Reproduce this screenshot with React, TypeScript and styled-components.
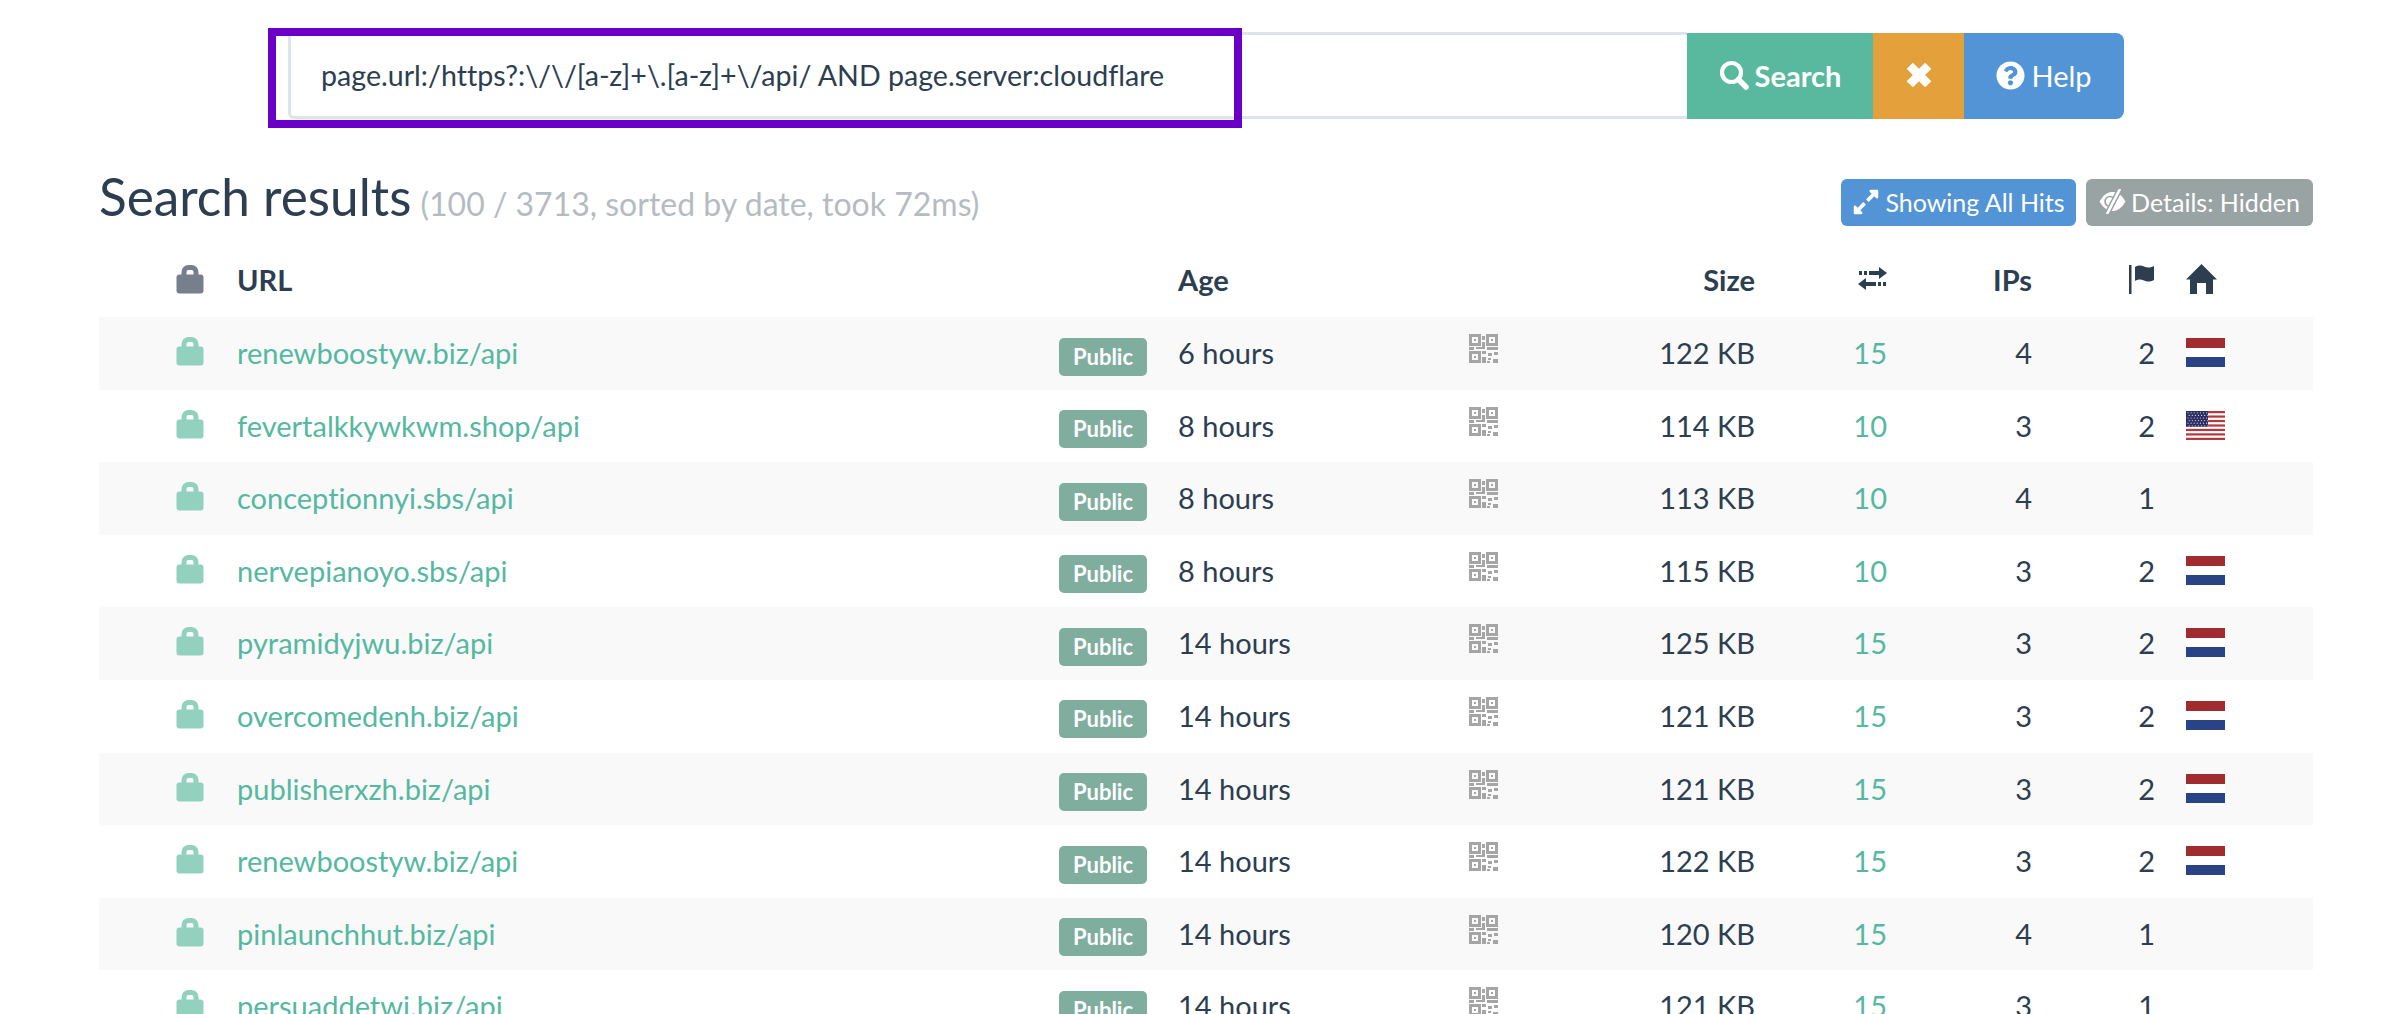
import React from 'react';
import styled, { createGlobalStyle } from 'styled-components';
import { FaQuestionCircle, FaExpandAlt } from 'react-icons/fa';

const Global = createGlobalStyle`
  html, body { margin: 0; padding: 0; background: #fff; height: 1014px; overflow: hidden; }
  body { font-family: Lato, "Open Sans", sans-serif; color: #2c3e50; font-variant-ligatures: none; }
  * { box-sizing: border-box; }
`;

const Page = styled.div`
  width: 2406px;
  height: 1014px;
  overflow: hidden;
  padding: 32px 93px 0 99px;
`;

const SearchBar = styled.form`
  position: relative;
  display: flex;
  margin: 0 0 0 189px;
  width: 1836px;
  height: 87px;
`;

const QueryInput = styled.div`
  flex: 1;
  display: flex;
  align-items: center;
  padding: 0 0 2px 30px;
  font-size: 28.6px;
  color: #2c3e50;
  background: #fff;
  border: 3px solid #dce4ec;
  border-right: none;
  border-radius: 6px 0 0 6px;
`;

const Highlight = styled.div`
  position: absolute;
  left: -20px;
  top: -4px;
  width: 974px;
  height: 100px;
  border: 8px solid #6a00c8;
  pointer-events: none;
`;

const SearchButton = styled.button<{ $bg: string; $w: number; $last?: boolean }>`
  width: ${p => p.$w}px;
  height: 86px;
  margin-top: 1px;
  display: flex;
  align-items: center;
  justify-content: center;
  gap: 6px;
  border: none;
  padding: 0 0 2px;
  background: ${p => p.$bg};
  color: #fff;
  font-family: inherit;
  font-size: 29px;
  font-weight: ${p => (p.$last ? 400 : 700)};
  border-radius: ${p => (p.$last ? '0 8px 8px 0' : '0')};
`;

const TitleRow = styled.div`
  display: flex;
  justify-content: space-between;
  align-items: flex-start;
  height: 89px;
  margin-top: 47px;
`;

const Title = styled.h2`
  margin: 0;
  font-size: 51.3px;
  line-height: 60px;
  font-weight: 400;
  color: #2c3e50;
`;

const TitleNote = styled.small`
  font-size: 32px;
  margin-left: -4px;
  color: #b4bcc2;
  font-weight: 400;
`;

const ToggleGroup = styled.div`
  display: flex;
  gap: 10px;
  margin-top: 13px;
`;

const ToggleButton = styled.button<{ $bg: string; $w: number }>`
  width: ${p => p.$w}px;
  height: 47px;
  display: flex;
  align-items: center;
  justify-content: center;
  gap: 5px;
  padding: 0 0 2px;
  border: none;
  border-radius: 6px;
  background: ${p => p.$bg};
  color: #fff;
  font-family: inherit;
  font-size: 25px;
`;

const columns = '138px 822px 119px 291px 131px 155px 132px 145px 123px 1fr';

const HeaderRow = styled.div`
  display: grid;
  grid-template-columns: ${columns};
  height: 62px;
  padding-bottom: 14px;
  align-items: center;
  font-size: 29px;
  font-weight: 700;
  color: #2c3e50;
`;

const Row = styled.div<{ $striped: boolean }>`
  display: grid;
  grid-template-columns: ${columns};
  height: 72.6px;
  align-items: start;
  font-size: 29px;
  background: ${p => (p.$striped ? '#f9f9f9' : '#fff')};
`;

const Cell = styled.div<{ $right?: boolean }>`
  padding-top: 19px;
  line-height: 33px;
  text-align: ${p => (p.$right ? 'right' : 'left')};
`;

const HeadCell = styled.div<{ $right?: boolean; $inset?: boolean }>`
  display: flex;
  align-items: center;
  justify-content: ${p => (p.$right ? 'flex-end' : 'flex-start')};
  padding-left: ${p => (p.$inset ? '31px' : '0')};
`;

const LockCell = styled.div`
  padding: 20px 0 0 77px;
  display: flex;
`;

const HeadLockCell = styled.div`
  padding-left: 77px;
  display: flex;
`;

const UrlLink = styled.a`
  color: #55b8a0;
  text-decoration: none;
`;

const Badge = styled.span`
  display: flex;
  align-items: center;
  justify-content: center;
  width: 88px;
  height: 38px;
  margin-top: 20.5px;
  padding-bottom: 1px;
  border-radius: 5px;
  background: #7fae9f;
  color: #fff;
  font-size: 22px;
  font-weight: 700;
`;

const QrCell = styled.div`
  padding-top: 17px;
  display: flex;
`;

const FlagCell = styled.div`
  padding: 21px 0 0 31px;
  display: flex;
`;

const Count = styled(Cell)`
  color: #55b8a0;
`;

const LockIcon = ({ color }: { color: string }) => (
  <svg width="28" height="29" viewBox="0 0 28 29">
    <path d="M8 12V7a4.5 4.5 0 0 1 4.5-4.5h3A4.5 4.5 0 0 1 20 7v5" fill="none" stroke={color} strokeWidth="5" />
    <rect x="0.5" y="9.5" width="27" height="19" rx="3" fill={color} />
  </svg>
);

const SearchIcon = () => (
  <svg width="30" height="30" viewBox="0 0 30 30" fill="none" stroke="#fff">
    <circle cx="12.5" cy="12.5" r="9.5" strokeWidth="4.2" />
    <path d="M19.5 19.5L27 27" strokeWidth="5.5" strokeLinecap="round" />
  </svg>
);

const TimesIcon = () => (
  <svg width="32" height="32" viewBox="0 0 26 26">
    <path d="M3 8L8 3l5 5 5-5 5 5-5 5 5 5-5 5-5-5-5 5-5-5 5-5z" fill="#fff" />
  </svg>
);

const ExchangeIcon = () => (
  <svg width="29" height="26" viewBox="0 0 29 26" fill="#2c3e50">
    <path d="M1 5h3v4H1zM6 5h3v4H6zM11 5h10V1l8 6-8 6V9H11zM28 16h-3v4h3zM23 16h-3v4h3zM18 16H8v-4L0 18l8 6v-4h10z" />
  </svg>
);

const FlagIcon = () => (
  <svg width="26" height="30" viewBox="0 0 26 30" fill="#2c3e50">
    <rect x="0" y="1" width="2.5" height="29" />
    <path d="M6 3c3-2 6-2 9-.5s6 1.5 10-.5v14c-4 2-7 2-10 .5s-6-1.5-9 .5z" />
  </svg>
);

const HomeIcon = () => (
  <svg width="31" height="30" viewBox="0 0 31 30" fill="#2c3e50">
    <path d="M15.5 0L31 15.5h-4V30h-7V19h-9v11H4V15.5H0z" />
  </svg>
);

const EyeSlashIcon = () => (
  <svg width="27" height="25" viewBox="0 0 27 25">
    <path d="M0.5 12.5C5 5 9 3 13.5 3s8.5 2 13 9.5C22 20 18 22 13.5 22s-8.5-2-13-9.5z" fill="#fff" />
    <circle cx="11" cy="12.5" r="5" fill="none" stroke="#99a3a4" strokeWidth="1.6" />
    <path d="M21 0L8 25" stroke="#99a3a4" strokeWidth="5.5" />
    <path d="M21 0L8 25" stroke="#fff" strokeWidth="2.6" />
  </svg>
);

const QrIcon = () => (
  <svg width="29" height="29" viewBox="0 0 29 29" fill="#a5a5a5">
    <path
      fillRule="evenodd"
      d="M0 0h12v12H0zM3 3v6h6V3zM17 0h12v12H17zM20 3v6h6V3zM0 17h12v12H0zM3 20v6h6v-6z"
    />
    <path d="M5 5h2v2H5zM22 5h2v2h-2zM5 22h2v2H5zM13 2h3v4h-3zM13 8h3v5h-3zM0 13h5v3H0zM7 13h9v2H7zM18 13h11v3H18zM13 17h4v3h-4zM19 19h4v3h-4zM25 18h4v3h-4zM13 23h4v6h-4zM19 24h3v2h-3zM24 25h5v4h-5zM18 27h3v2h-3z" />
  </svg>
);

const NlFlag = () => (
  <svg width="39" height="29" viewBox="0 0 39 29">
    <rect width="39" height="10" fill="#a02c2f" />
    <rect y="10" width="39" height="9" fill="#fff" />
    <rect y="19" width="39" height="10" fill="#2a4385" />
  </svg>
);

const stripes = [0, 1, 2, 3, 4, 5, 6];
const stars: [number, number][] = [];
for (let r = 0; r < 6; r += 1) {
  for (let c = 0; c < 7; c += 1) {
    stars.push([2 + c * 3.1 + (r % 2) * 1.2, 1.8 + r * 2.6]);
  }
}

const UsFlag = () => (
  <svg width="39" height="29" viewBox="0 0 39 29">
    <rect width="39" height="29" fill="#fff" />
    {stripes.map(i => (
      <rect key={i} y={i * 4.46} width="39" height="2.23" fill="#b2393f" />
    ))}
    <rect width="22" height="15.6" fill="#2c2f63" />
    {stars.map(([x, y]) => (
      <circle key={`${x}-${y}`} cx={x} cy={y} r="0.6" fill="#d9dbe8" />
    ))}
  </svg>
);

type Result = { url: string; age: string; size: string; reqs: number; ips: number; countries: number; flag: 'nl' | 'us' | null };

const results: Result[] = [
  { url: 'renewboostyw.biz/api', age: '6 hours', size: '122 KB', reqs: 15, ips: 4, countries: 2, flag: 'nl' },
  { url: 'fevertalkkywkwm.shop/api', age: '8 hours', size: '114 KB', reqs: 10, ips: 3, countries: 2, flag: 'us' },
  { url: 'conceptionnyi.sbs/api', age: '8 hours', size: '113 KB', reqs: 10, ips: 4, countries: 1, flag: null },
  { url: 'nervepianoyo.sbs/api', age: '8 hours', size: '115 KB', reqs: 10, ips: 3, countries: 2, flag: 'nl' },
  { url: 'pyramidyjwu.biz/api', age: '14 hours', size: '125 KB', reqs: 15, ips: 3, countries: 2, flag: 'nl' },
  { url: 'overcomedenh.biz/api', age: '14 hours', size: '121 KB', reqs: 15, ips: 3, countries: 2, flag: 'nl' },
  { url: 'publisherxzh.biz/api', age: '14 hours', size: '121 KB', reqs: 15, ips: 3, countries: 2, flag: 'nl' },
  { url: 'renewboostyw.biz/api', age: '14 hours', size: '122 KB', reqs: 15, ips: 3, countries: 2, flag: 'nl' },
  { url: 'pinlaunchhut.biz/api', age: '14 hours', size: '120 KB', reqs: 15, ips: 4, countries: 1, flag: null },
  { url: 'persuaddetwi.biz/api', age: '14 hours', size: '121 KB', reqs: 15, ips: 3, countries: 1, flag: null },
];

export default function App() {
  return (
    <Page>
      <Global />
      <SearchBar>
        <QueryInput>{'page.url:/https?:\\/\\/[a-z]+\\.[a-z]+\\/api/ AND page.server:cloudflare'}</QueryInput>
        <SearchButton type="button" $bg="#59b99e" $w={186}>
          <SearchIcon />
          Search
        </SearchButton>
        <SearchButton type="button" $bg="#e4a03b" $w={91}>
          <TimesIcon />
        </SearchButton>
        <SearchButton type="button" $bg="#5294d6" $w={160} $last>
          <FaQuestionCircle size={29} />
          Help
        </SearchButton>
        <Highlight />
      </SearchBar>
      <TitleRow>
        <Title>
          Search results <TitleNote>(100 / 3713, sorted by date, took 72ms)</TitleNote>
        </Title>
        <ToggleGroup>
          <ToggleButton type="button" $bg="#5294d6" $w={235}>
            <FaExpandAlt size={28} />
            Showing All Hits
          </ToggleButton>
          <ToggleButton type="button" $bg="#99a3a4" $w={227}>
            <EyeSlashIcon />
            Details: Hidden
          </ToggleButton>
        </ToggleGroup>
      </TitleRow>
      <HeaderRow>
        <HeadLockCell>
          <LockIcon color="#787f8c" />
        </HeadLockCell>
        <HeadCell>URL</HeadCell>
        <HeadCell />
        <HeadCell>Age</HeadCell>
        <HeadCell />
        <HeadCell $right>Size</HeadCell>
        <HeadCell $right>
          <ExchangeIcon />
        </HeadCell>
        <HeadCell $right>IPs</HeadCell>
        <HeadCell $right>
          <FlagIcon />
        </HeadCell>
        <HeadCell $inset>
          <HomeIcon />
        </HeadCell>
      </HeaderRow>
      {results.map((r, i) => (
        <Row key={i} $striped={i % 2 === 0}>
          <LockCell>
            <LockIcon color="#92d1bd" />
          </LockCell>
          <Cell>
            <UrlLink href="#">{r.url}</UrlLink>
          </Cell>
          <div>
            <Badge>Public</Badge>
          </div>
          <Cell>{r.age}</Cell>
          <QrCell>
            <QrIcon />
          </QrCell>
          <Cell $right>{r.size}</Cell>
          <Count $right>{r.reqs}</Count>
          <Cell $right>{r.ips}</Cell>
          <Cell $right>{r.countries}</Cell>
          <FlagCell>{r.flag === 'nl' ? <NlFlag /> : r.flag === 'us' ? <UsFlag /> : null}</FlagCell>
        </Row>
      ))}
    </Page>
  );
}
